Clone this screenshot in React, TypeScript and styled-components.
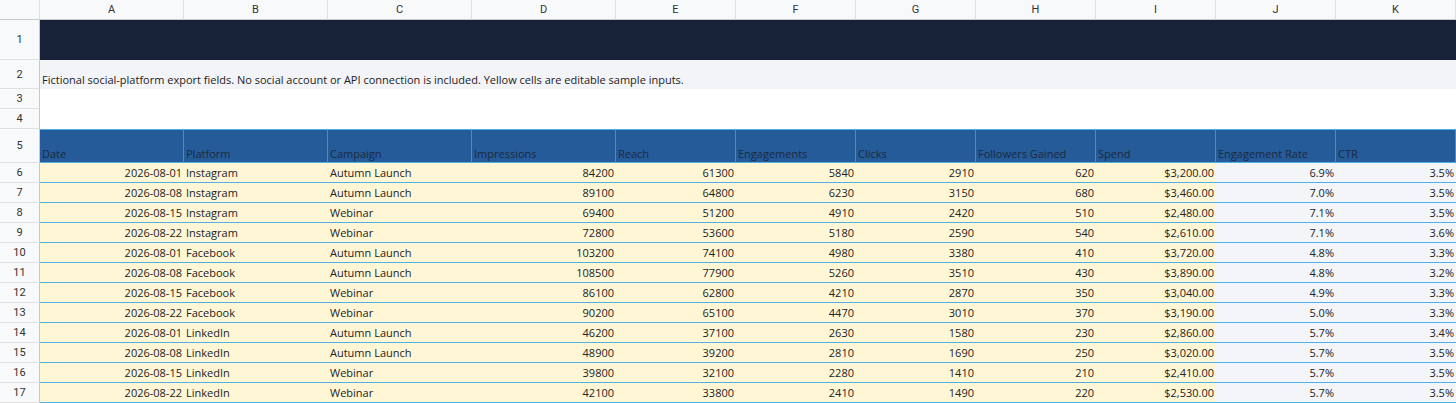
import React from 'react';
import styled, { createGlobalStyle } from 'styled-components';

const Global = createGlobalStyle`
  body { margin: 0; background: #fff; font-family: "Open Sans", "Noto Sans", sans-serif; overflow: hidden; }
`;

const cols = '40px 144px 144px 144px 144px 120px 120px 120px 120px 120px 120px 120px';
const letters = ['A', 'B', 'C', 'D', 'E', 'F', 'G', 'H', 'I', 'J', 'K'];

const Sheet = styled.div`
  display: grid;
  grid-template-columns: ${cols};
  width: 1456px;
`;

const ColHead = styled.div`
  height: 20px;
  background: #f8f9fa;
  border-right: 1px solid #e0e0e0;
  border-bottom: 1px solid #c8c8c8;
  box-sizing: border-box;
  display: flex;
  align-items: center;
  justify-content: center;
  font-family: Roboto, "Liberation Sans", sans-serif;
  font-size: 11px;
  color: #333;
`;

const RowHead = styled.div<{ h: number }>`
  height: ${p => p.h}px;
  background: #f8f9fa;
  border-right: 1px solid #c8c8c8;
  border-bottom: 1px solid #e0e0e0;
  box-sizing: border-box;
  display: flex;
  align-items: center;
  justify-content: center;
  font-family: Roboto, "Liberation Sans", sans-serif;
  font-size: 11px;
  color: #333;
`;

const Band = styled.div<{ h: number; bg: string }>`
  grid-column: 2 / -1;
  height: ${p => p.h}px;
  background: ${p => p.bg};
  display: flex;
  align-items: flex-end;
  padding: 0 2px 2px;
  box-sizing: border-box;
  font-size: 11px;
  color: #222;
  white-space: nowrap;
`;

const HeadCell = styled.div`
  height: 34px;
  background: #255b99;
  border-right: 1px solid #5a86bb;
  border-top: 1px solid #4fb0e6;
  border-bottom: 1px solid #4fb0e6;
  box-sizing: border-box;
  display: flex;
  align-items: flex-end;
  padding: 0 2px 1px;
  font-size: 11px;
  color: #1b2a40;
  white-space: nowrap;
  overflow: hidden;
`;

const Cell = styled.div<{ right?: boolean; calc?: boolean }>`
  height: 20px;
  background: ${p => (p.calc ? '#f3f5f9' : '#fff6d6')};
  border-bottom: 1px solid #4fb0e6;
  box-sizing: border-box;
  display: flex;
  align-items: center;
  justify-content: ${p => (p.right ? 'flex-end' : 'flex-start')};
  padding: 0 2px;
  font-size: 11px;
  color: #222;
  white-space: nowrap;
`;

const headers = ['Date', 'Platform', 'Campaign', 'Impressions', 'Reach', 'Engagements', 'Clicks', 'Followers Gained', 'Spend', 'Engagement Rate', 'CTR'];

const rows = [
  ['2026-08-01', 'Instagram', 'Autumn Launch', '84200', '61300', '5840', '2910', '620', '$3,200.00', '6.9%', '3.5%'],
  ['2026-08-08', 'Instagram', 'Autumn Launch', '89100', '64800', '6230', '3150', '680', '$3,460.00', '7.0%', '3.5%'],
  ['2026-08-15', 'Instagram', 'Webinar', '69400', '51200', '4910', '2420', '510', '$2,480.00', '7.1%', '3.5%'],
  ['2026-08-22', 'Instagram', 'Webinar', '72800', '53600', '5180', '2590', '540', '$2,610.00', '7.1%', '3.6%'],
  ['2026-08-01', 'Facebook', 'Autumn Launch', '103200', '74100', '4980', '3380', '410', '$3,720.00', '4.8%', '3.3%'],
  ['2026-08-08', 'Facebook', 'Autumn Launch', '108500', '77900', '5260', '3510', '430', '$3,890.00', '4.8%', '3.2%'],
  ['2026-08-15', 'Facebook', 'Webinar', '86100', '62800', '4210', '2870', '350', '$3,040.00', '4.9%', '3.3%'],
  ['2026-08-22', 'Facebook', 'Webinar', '90200', '65100', '4470', '3010', '370', '$3,190.00', '5.0%', '3.3%'],
  ['2026-08-01', 'LinkedIn', 'Autumn Launch', '46200', '37100', '2630', '1580', '230', '$2,860.00', '5.7%', '3.4%'],
  ['2026-08-08', 'LinkedIn', 'Autumn Launch', '48900', '39200', '2810', '1690', '250', '$3,020.00', '5.7%', '3.5%'],
  ['2026-08-15', 'LinkedIn', 'Webinar', '39800', '32100', '2280', '1410', '210', '$2,410.00', '5.7%', '3.5%'],
  ['2026-08-22', 'LinkedIn', 'Webinar', '42100', '33800', '2410', '1490', '220', '$2,530.00', '5.7%', '3.5%'],
];

export default function App() {
  return (
    <>
      <Global />
      <Sheet>
        <ColHead />
        {letters.map(l => <ColHead key={l}>{l}</ColHead>)}
        <RowHead h={40}>1</RowHead>
        <Band h={40} bg="#172239" />
        <RowHead h={29}>2</RowHead>
        <Band h={29} bg="#f3f4f8">
          Fictional social-platform export fields. No social account or API connection is included. Yellow cells are editable sample inputs.
        </Band>
        <RowHead h={20}>3</RowHead>
        <Band h={20} bg="#fff" />
        <RowHead h={20}>4</RowHead>
        <Band h={20} bg="#fff" />
        <RowHead h={34}>5</RowHead>
        {headers.map(h => <HeadCell key={h}>{h}</HeadCell>)}
        {rows.map((r, i) => (
          <React.Fragment key={i}>
            <RowHead h={20}>{i + 6}</RowHead>
            {r.map((v, j) => (
              <Cell key={j} right={j === 0 || j >= 3} calc={j >= 9}>{v}</Cell>
            ))}
          </React.Fragment>
        ))}
      </Sheet>
    </>
  );
}
